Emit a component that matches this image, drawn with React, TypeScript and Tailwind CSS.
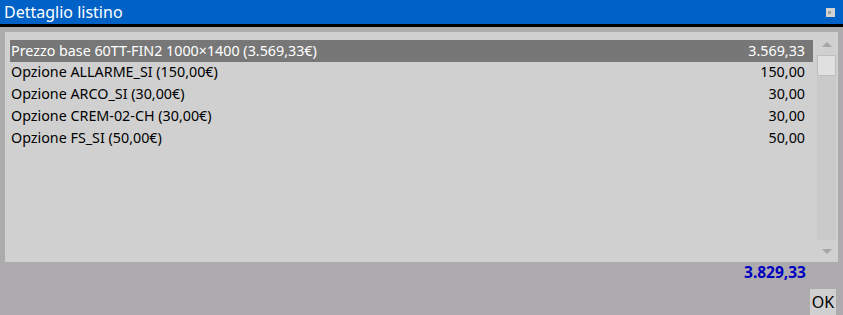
const rows = [
  { label: "Prezzo base 60TT-FIN2 1000×1400 (3.569,33€)", value: "3.569,33" },
  { label: "Opzione ALLARME_SI (150,00€)", value: "150,00" },
  { label: "Opzione ARCO_SI (30,00€)", value: "30,00" },
  { label: "Opzione CREM-02-CH (30,00€)", value: "30,00" },
  { label: "Opzione FS_SI (50,00€)", value: "50,00" },
];

export default function App() {
  return (
    <div
      className="w-[843px] h-[315px] bg-[#adabad] flex flex-col overflow-hidden"
      style={{ fontFamily: '"Noto Sans", "Open Sans", sans-serif' }}
    >
      {/* Title bar */}
      <div className="h-[27px] bg-[#0062c6] border-b-[3px] border-black flex items-center justify-between pl-[4px] pr-[8px] shrink-0">
        <span className="text-white text-[16px] leading-none -mt-[1px]">Dettaglio listino</span>
        <div className="w-[9px] h-[9px] bg-[#d2d2d2] flex items-center pl-[2px]">
          <div className="w-[3px] h-[3px] bg-[#a0a0a0]" />
        </div>
      </div>

      {/* List panel */}
      <div className="mt-[5px] mx-[5px] h-[230px] bg-[#d0d0d0] flex pt-[8px] pl-[5px] pr-[2px] shrink-0">
        <div className="w-[803px] flex flex-col">
          {rows.map((r, i) => (
            <div
              key={r.label}
              className={`flex items-center justify-between h-[21.75px] pl-[1px] pr-[8px] text-[14.3px] leading-none ${
                i === 0 ? "bg-[#777777] text-white" : "text-black"
              }`}
            >
              <span>{r.label}</span>
              <span>{r.value}</span>
            </div>
          ))}
        </div>
        {/* Scrollbar */}
        <div className="ml-[4px] w-[19px] -mt-[8px] flex flex-col items-center">
          <div className="h-[23px] flex items-center justify-center pt-[2px]">
            <div className="w-0 h-0 border-l-[5px] border-r-[5px] border-b-[5px] border-l-transparent border-r-transparent border-b-[#a4a4a4]" />
          </div>
          <div className="w-[19px] flex-1 bg-[#cacaca] flex flex-col">
            <div className="w-[19px] h-[21px] bg-[#e0e0e0] border border-[#bdbdbd]" />
          </div>
          <div className="h-[22px] flex items-center justify-center">
            <div className="w-0 h-0 border-l-[5px] border-r-[5px] border-t-[5px] border-l-transparent border-r-transparent border-t-[#a4a4a4]" />
          </div>
        </div>
      </div>

      {/* Total */}
      <div className="h-[22px] flex items-center justify-end pr-[37px] shrink-0">
        <span className="text-[#0000c0] font-bold text-[15.5px] leading-none">3.829,33</span>
      </div>

      {/* Footer */}
      <div className="flex justify-end pr-[7px] mt-auto">
        <button className="w-[26px] h-[26px] bg-[#d0d0d0] text-black text-[16px] leading-none flex items-center justify-center">
          OK
        </button>
      </div>
    </div>
  );
}
